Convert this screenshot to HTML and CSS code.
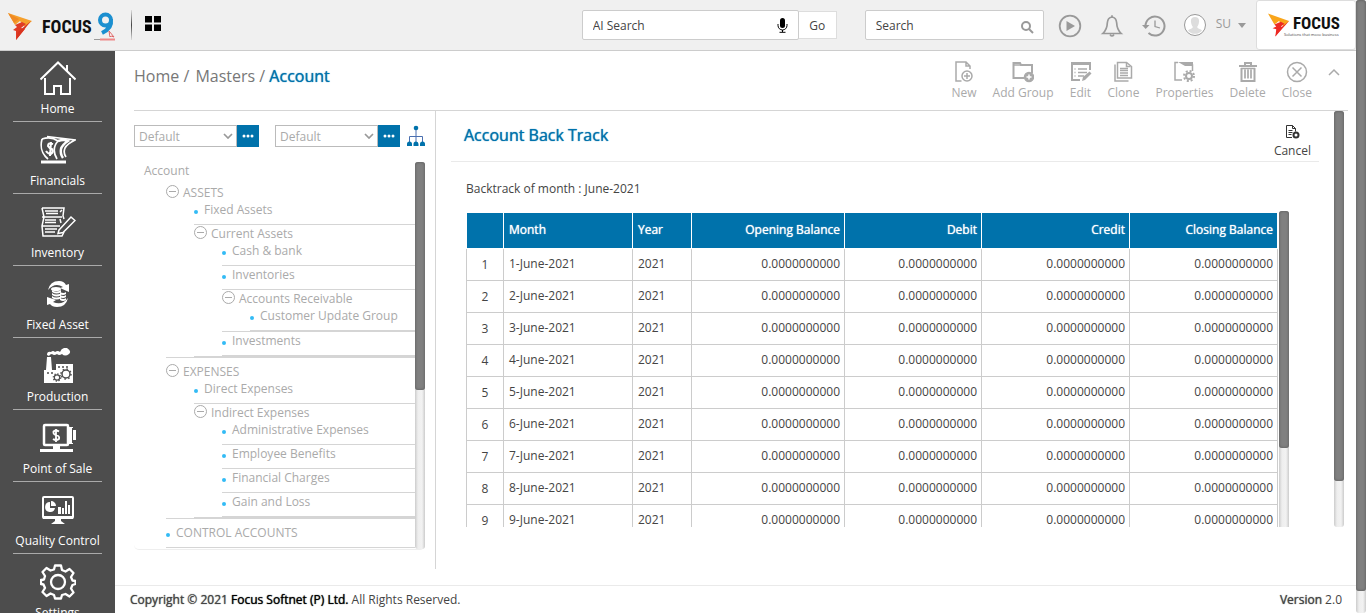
FILE: index.html
```html
<!DOCTYPE html>
<html lang="en">
<head>
<meta charset="utf-8">
<title>Account Back Track</title>
<link rel="stylesheet" href="styles.css">
</head>
<body>
<div class="app">
  <header class="topbar">
    <a class="brand" href="#" aria-label="Focus 9 home">
      <svg class="brand-mark" viewBox="0 0 26 30" width="26" height="30"><path d="M1 1 25 9 18 15 13 9 8 13Z" fill="#f5a02c"/><path d="M1 1 12 7 7 11Z" fill="#f08a24"/><path d="M8 13 15 10 19 12 14 16 18 17 9 28 9 19 6 18 10 15Z" fill="#e03c25"/><path d="M18 14 24 9 9 28 11 20Z" fill="#d9341f"/></svg>
      <span class="brand-name">FOCUS</span>
      <svg class="brand-nine" viewBox="0 0 24 30" width="24" height="30"><path d="M17 8A5.500 5.500 0 1 0 11.500 13.500C15 13.500 17 11 17 8C18 14 14 18 8 21" fill="none" stroke="#1b8fd0" stroke-width="4"/><path d="m15 19 5 6-3-1-1 1z" fill="#fff" stroke="#d66" stroke-width="1"/><path d="M-8 27.500h14" stroke="#999" stroke-width="1"/><path d="M6 27.500h15" stroke="#e88" stroke-width="2"/></svg>
    </a>
    <span class="divider"></span>
    <button class="icon-btn" aria-label="Apps"><svg viewBox="0 0 16 15" width="16" height="15"><path d="M0 0h7v6.500H0zM9 0h7v6.500H9zM0 8.500h7V15H0zM9 8.500h7V15H9z" fill="#000"/></svg></button>
    <form class="ai-search">
      <div class="field ai-field">
        <input type="text" placeholder="AI Search" aria-label="AI Search">
        <button type="button" class="icon-btn" aria-label="Voice search"><svg viewBox="0 0 11 15" width="11" height="15"><rect x="3" y="0" width="5" height="10" rx="2.500"/><path d="M1 6v1.500a4.500 4.500 0 0 0 9 0V6M5.500 12v2M2.500 14.300h6" fill="none" stroke="#000"/></svg></button>
      </div>
      <button type="button" class="go">Go</button>
    </form>
    <div class="field find-field">
      <input type="text" placeholder="Search" aria-label="Search">
      <button type="button" class="icon-btn" aria-label="Find"><svg viewBox="0 0 13 13" width="13" height="13" fill="none" stroke="#999" stroke-width="2"><circle cx="5" cy="5" r="4"/><path d="m8 8 4 4"/></svg></button>
    </div>
    <div class="top-icons">
      <button class="icon-btn" aria-label="Play"><svg viewBox="0 0 24 24" width="24" height="24"><circle cx="12" cy="12" r="10.300" fill="none" stroke="#999" stroke-width="1.800"/><path d="M8.500 7v10l8.500-5z" fill="#999"/></svg></button>
      <button class="icon-btn" aria-label="Notifications"><svg viewBox="0 0 24 24" width="24" height="24" fill="none" stroke="#999" stroke-width="1.700"><path d="M12 3C8.500 3.500 7.500 6 7.300 9 7.200 14 6 16.500 2.800 19.500H21.200C18 16.500 16.800 14 16.700 9 16.500 6 15.500 3.500 12 3z"/><path d="M12 3V1.200M10 20.500q2 3 4 0"/></svg></button>
      <button class="icon-btn" aria-label="History"><svg viewBox="0 0 24 24" width="24" height="24" fill="none" stroke="#999" stroke-width="2"><path d="M3.500 12a9.500 9.500 0 1 1 3 7"/><path d="m13 6.500v6l5 1.500" stroke-width="1.300"/><path d="M0 11h7.500L3.700 15z" fill="#999" stroke="none"/></svg></button>
    </div>
    <button class="user"><svg viewBox="0 0 24 24" width="24" height="24"><circle cx="12" cy="12" r="10.500" fill="#fff" stroke="#999"/><path d="M12 4c-3 0-4.500 2-4 5 .3 2.500 1 4 2 5-1 2-4 2-5 3.500a9 9 0 0 0 14 0C18 16 15 16 14 14c1-1 1.700-2.500 2-5 .5-3-1-5-4-5z" fill="#ddd"/></svg><span>SU</span><svg viewBox="0 0 8 5" width="8" height="5"><path d="M0 0h8L4 5z" fill="#999"/></svg></button>
    <a class="client" href="#" aria-label="Focus">
      <svg viewBox="0 0 24 26" width="22" height="25"><path d="M0 0 23 8 17 14 12 8 7 12Z" fill="#f9a51a"/><path d="M7 12 14 9 18 11 14 14 16 15 8 25 9 17 5 16 9 14Z" fill="#ed2a24"/><path d="M17 13 23 8 8 25 10 18Z" fill="#ed2a24"/></svg>
      <span class="client-text"><span class="client-name">FOCUS</span><span class="client-tag">Solutions that move business</span></span>
    </a>
  </header>

  <div class="frame">
    <nav class="sidebar">
      <a class="side-item" href="#"><svg viewBox="0 0 36 36" fill="none" stroke="#fff" stroke-width="2"><path d="M0.500 19.500 18 2.500 35.500 19.500M27 10.500V5M5 18v16h9v-8h7v8h9V18"/></svg><span>Home</span></a>
      <a class="side-item" href="#"><svg viewBox="0 0 36 36" fill="none" stroke="#fff" stroke-width="1.700"><path d="M2 7q9-3 16 2-7 8-1 18M2 7c-2 8-1 14 6 20"/><path d="M7 4.500 35 8q-8 4-10 8-2 5 1 9" /><path d="M18 9q6-2 10 0-6 4-7 8-1 5 2 9" stroke-width="2.500"/><path d="M1 30h25" stroke-width="3"/><path d="M13 12q-5-2-5 2 1 2 4 3 2 3-1 5-3 0-5-3M11 10l-1 14" stroke-width="2"/></svg><span>Financials</span></a>
      <a class="side-item" href="#"><svg viewBox="0 0 36 36" fill="none" stroke="#fff" stroke-width="1.500"><path d="M2 4h22l-1 8 1 3M2 4l2 9-2 9 1 10h19l2-4M2 13h20M2 22h18M5 7h13M6 9.500h12M5 16h11M5 18.500h11M5 25h12M5 28h10M20 8l2-2M20 15l1 4"/><path d="m19 26 12-13 4 3.500-12 12-5 1z" fill="#4d4d4d"/></svg><span>Inventory</span></a>
      <a class="side-item" href="#"><svg viewBox="0 0 36 36" fill="#fff"><path d="M8 14Q10 5 19 5q5 0 7 4l3-1v8l-9-4 3-1q-8-5-15 3zM28 22q-2 9-11 9-5 0-7-3l-3 1v-8l9 3-3 2q9 4 15-4z"/><ellipse cx="16" cy="13" rx="5" ry="2"/><path d="M12 14q4 3 9 0v2q-4 3-9 0zM12 17q4 3 9 0v2q-4 3-9 0zM12 20q4 3 9 0v2q-4 3-9 0zM20 16q4 2 6 0v2q-3 2-6 0zM20 19q4 2 6 0v2q-3 2-6 0zM20 22q4 2 6 0v2q-3 2-6 0z"/></svg><span>Fixed Asset</span></a>
      <a class="side-item" href="#"><svg viewBox="0 0 36 36" fill="#fff"><path d="M4 35V22h2L7 9h4l1 13h4v-6h17v19z"/><path d="M7 7q0-4 4-3 2-2 4 0 3-2 5 0 2-5 7-4 5 3 2 6-4 3-7 0-3 2-5 0-3 2-5 0-2 0-3 2z"/><path d="M18 19h2m2 0h2m2 0h2M7 25h2m2 0h2" stroke="#4d4d4d" stroke-width="1.500"/><g fill="none" stroke="#4d4d4d"><circle cx="26" cy="26" r="4" stroke-width="1.500"/><circle cx="26" cy="26" r="5" stroke-width="1.500" stroke-dasharray="1.500 2.400"/><circle cx="17" cy="29.500" r="2.700" stroke-width="1.200"/><circle cx="17" cy="29.500" r="3.600" stroke-width="1.500" stroke-dasharray="1.200 1.600"/></g></svg><span>Production</span></a>
      <a class="side-item" href="#"><svg viewBox="0 0 36 36"><rect x="4" y="5" width="24" height="20" rx="1" fill="none" stroke="#fff" stroke-width="2.500"/><path d="M29 7h4v3h3v10h-3v4h-4zM13 26h7v3h13v3H0v-3h13z" fill="#fff"/><path d="M32.500 8v15" stroke="#4d4d4d"/><path d="M19 11.500q-3-2-5.500 0-.5 3 2.500 3.500 4 1 3 4-3 2-6 0M16 9v13" fill="none" stroke="#fff" stroke-width="1.800"/></svg><span>Point of Sale</span></a>
      <a class="side-item" href="#"><svg viewBox="0 0 36 36" fill="#fff"><rect x="3" y="5" width="30" height="21" rx="1" fill="none" stroke="#fff" stroke-width="2"/><path d="M3 24h30v3H3zM15 27h6v2l4 3H11l4-3zM18 15h3v7h-3zM22 16h2v6h-2zM25 9h2v13h-2zM28 13h2v9h-2z"/><path d="M10 10a5 5 0 1 0 5 6h-5zM11 9v5h5a5 5 0 0 0-5-5z"/></svg><span>Quality Control</span></a>
      <a class="side-item" href="#"><svg viewBox="0 0 36 36" fill="none" stroke="#fff" stroke-width="2.300" stroke-linejoin="round"><circle cx="18" cy="18" r="7"/><path d="M15 1.500h6l1 4.500 3.500 1.500 4-2.500 4 4-2.500 4 1.500 3.500 3 .5v3l-3 1-1.500 3.500 2.500 4-4 4-4-2.500L22 31l-1 3.500h-6L14 31l-3.500-1.500-4 2.500-4-4L5 24l-1.500-3.500L1 20v-4l3-.5L5 12 2.500 8l4-4 4 2.500L14 5.500z"/></svg><span>Settings</span></a>
    </nav>

    <div class="main">
      <div class="page-head">
        <div class="crumbs"><a href="#">Home</a> / <a class="parent" href="#">Masters</a> / <strong>Account</strong></div>
        <div class="tools">
          <button><svg viewBox="0 0 22 22"><path d="M8.500 20H3V1h10l4 4v3M13 1v4h4"/><circle cx="14" cy="15" r="5"/><path d="M14 12v6M11 15h6"/></svg>New</button>
          <button><svg viewBox="0 0 22 22"><path d="M12 17H1.500V2H8l1 2h11v8" stroke-width="2"/><path d="M1.500 4h9"/><circle cx="17" cy="16" r="4.500" fill="#aaa"/><path d="M17 13.500v5M14.500 16h5" stroke="#fff"/></svg>Add Group</button>
          <button><svg viewBox="0 0 22 22"><path d="M10 19H2V2h18v7" stroke-width="2"/><path d="M2 2.500h18" stroke-width="3"/><path d="M8 8h9M8 11.500h9M8 15h6M4.500 8h1M4.500 11.500h1M4.500 15h1"/><path d="m12 20 1-4 6.500-5.500 2 2L15 19z" fill="#aaa" stroke="none"/></svg>Edit</button>
          <button><svg viewBox="0 0 22 22" stroke-width="1"><path d="M5.500 17V1.500h9l5 4V17zM3 3.500v16.500h13.500"/><path d="M8 7.500h8M8 9.500h8M8 12h8M8 14.500h8M14.500 1.500v4h4"/></svg>Clone</button>
          <button><svg viewBox="0 0 22 22"><path d="M9 19H2V1.500h3M12 4h7.500v6"/><path d="M5 1h15v4h-8z" fill="#aaa" stroke="none"/><circle cx="16" cy="15" r="3" stroke-width="2"/><circle cx="16" cy="15" r="5" stroke-width="2" stroke-dasharray="2 1.930"/></svg>Properties</button>
          <button><svg viewBox="0 0 22 22"><path d="M2 5h18M8 4V2h6v2" stroke-width="2"/><path d="M4.500 7v13h13V7" stroke-width="2"/><path d="M4 7.500h14M8 8.500v9M11 8.500v9M14 8.500v9" stroke-width="1.700"/></svg>Delete</button>
          <button><svg viewBox="0 0 22 22"><circle cx="11" cy="11" r="9.500"/><path d="m6.500 6.500 9 9M15.500 6.500l-9 9"/></svg>Close</button>
          <button class="collapse" aria-label="Collapse"><svg viewBox="0 0 12 8"><path d="m1 7 5-5 5 5"/></svg></button>
        </div>
      </div>

      <div class="workspace">
        <aside class="tree-panel">
          <div class="tree-tools">
            <div class="picker"><label class="drop"><select aria-label="View"><option>Default</option></select><svg viewBox="0 0 10 6" width="10" height="6"><path d="m1 1 4 4 4-4" fill="none" stroke="#999" stroke-width="1.700"/></svg></label><button aria-label="View options"><svg viewBox="0 0 12 4" width="12" height="4" fill="#fff"><circle cx="2" cy="2" r="1.500"/><circle cx="6" cy="2" r="1.500"/><circle cx="10" cy="2" r="1.500"/></svg></button></div>
            <div class="picker"><label class="drop"><select aria-label="Tree"><option>Default</option></select><svg viewBox="0 0 10 6" width="10" height="6"><path d="m1 1 4 4 4-4" fill="none" stroke="#999" stroke-width="1.700"/></svg></label><button aria-label="Tree options"><svg viewBox="0 0 12 4" width="12" height="4" fill="#fff"><circle cx="2" cy="2" r="1.500"/><circle cx="6" cy="2" r="1.500"/><circle cx="10" cy="2" r="1.500"/></svg></button></div>
            <button class="icon-btn" aria-label="Hierarchy"><svg viewBox="0 0 18 22" width="18" height="22"><path d="M9 3v16M2.500 18v-6.500h13v6.500" fill="none" stroke="#4a6fb0"/><g fill="#0072ab"><circle cx="9" cy="3" r="2.300"/><path d="M0 21v-2a2.500 2.500 0 0 1 5 0v2zM6.500 21v-2a2.500 2.500 0 0 1 5 0v2zM13 21v-2a2.500 2.500 0 0 1 5 0v2z"/></g></svg></button>
          </div>
          <div class="tree-box">
            <div class="tree">
              <div class="tree-title">Account</div>
              <ul class="root">
                <li><div class="node"><button aria-label="Collapse Assets"></button>ASSETS</div>
                  <ul>
                    <li class="leaf">Fixed Assets</li>
                    <li><div class="node"><button aria-label="Collapse Current Assets"></button>Current Assets</div>
                      <ul>
                        <li class="leaf">Cash &amp; bank</li>
                        <li class="leaf">Inventories</li>
                        <li><div class="node"><button aria-label="Collapse Accounts Receivable"></button>Accounts Receivable</div>
                          <ul><li class="leaf">Customer Update Group</li></ul></li>
                        <li class="leaf">Investments</li>
                      </ul></li>
                  </ul></li>
                <li><div class="node"><button aria-label="Collapse Expenses"></button>EXPENSES</div>
                  <ul>
                    <li class="leaf">Direct Expenses</li>
                    <li><div class="node"><button aria-label="Collapse Indirect Expenses"></button>Indirect Expenses</div>
                      <ul>
                        <li class="leaf">Administrative Expenses</li>
                        <li class="leaf">Employee Benefits</li>
                        <li class="leaf">Financial Charges</li>
                        <li class="leaf">Gain and Loss</li>
                      </ul></li>
                  </ul></li>
                <li class="leaf">CONTROL ACCOUNTS</li>
              </ul>
            </div>
            <div class="bar"><div class="thumb" style="height:59%"></div></div>
          </div>
        </aside>

        <section class="detail">
          <div class="detail-body">
            <div class="detail-head">
              <h1>Account Back Track</h1>
              <button class="cancel"><svg viewBox="0 0 15 14" width="15" height="14" fill="none" stroke="#333"><path d="M7 12.500H1.500V.5h6l3 3v3M7.500.5v3h3M3.500 5.500h4M3.500 7.500h4M3.500 9.500h3"/><circle cx="11" cy="10" r="2.500" stroke-width="2"/></svg>Cancel</button>
            </div>
            <p class="note">Backtrack of month : June-2021</p>
            <div class="grid-area">
              <div class="grid-view">
                <table>
                  <colgroup><col class="c-no"><col class="c-month"><col class="c-year"><col class="c-open"><col class="c-debit"><col class="c-amt"><col class="c-amt"></colgroup>
                  <thead><tr><th></th><th>Month</th><th>Year</th><th class="num">Opening Balance</th><th class="num">Debit</th><th class="num">Credit</th><th class="num">Closing Balance</th></tr></thead>
                  <tbody>
                    <tr><td>1</td><td>1-June-2021</td><td>2021</td><td class="num">0.0000000000</td><td class="num">0.0000000000</td><td class="num">0.0000000000</td><td class="num">0.0000000000</td></tr>
                    <tr><td>2</td><td>2-June-2021</td><td>2021</td><td class="num">0.0000000000</td><td class="num">0.0000000000</td><td class="num">0.0000000000</td><td class="num">0.0000000000</td></tr>
                    <tr><td>3</td><td>3-June-2021</td><td>2021</td><td class="num">0.0000000000</td><td class="num">0.0000000000</td><td class="num">0.0000000000</td><td class="num">0.0000000000</td></tr>
                    <tr><td>4</td><td>4-June-2021</td><td>2021</td><td class="num">0.0000000000</td><td class="num">0.0000000000</td><td class="num">0.0000000000</td><td class="num">0.0000000000</td></tr>
                    <tr><td>5</td><td>5-June-2021</td><td>2021</td><td class="num">0.0000000000</td><td class="num">0.0000000000</td><td class="num">0.0000000000</td><td class="num">0.0000000000</td></tr>
                    <tr><td>6</td><td>6-June-2021</td><td>2021</td><td class="num">0.0000000000</td><td class="num">0.0000000000</td><td class="num">0.0000000000</td><td class="num">0.0000000000</td></tr>
                    <tr><td>7</td><td>7-June-2021</td><td>2021</td><td class="num">0.0000000000</td><td class="num">0.0000000000</td><td class="num">0.0000000000</td><td class="num">0.0000000000</td></tr>
                    <tr><td>8</td><td>8-June-2021</td><td>2021</td><td class="num">0.0000000000</td><td class="num">0.0000000000</td><td class="num">0.0000000000</td><td class="num">0.0000000000</td></tr>
                    <tr><td>9</td><td>9-June-2021</td><td>2021</td><td class="num">0.0000000000</td><td class="num">0.0000000000</td><td class="num">0.0000000000</td><td class="num">0.0000000000</td></tr>
                  </tbody>
                </table>
              </div>
              <div class="bar"><div class="thumb" style="height:75%"></div></div>
            </div>
          </div>
          <div class="bar"><div class="thumb" style="height:89%"></div></div>
        </section>
      </div>

      <footer class="footer">
        <span><b>Copyright © 2021 <span class="company">Focus Softnet (P) Ltd.</span></b> All Rights Reserved.</span>
        <span><b>Version</b> 2.0</span>
      </footer>
    </div>
  </div>
</div>
<div class="bar page-bar"><div class="thumb" style="height:96.4%"></div></div>
</body>
</html>
```
FILE: styles.css
```css
* { box-sizing: border-box; }

body {
  display: flex;
  height: 100vh;
  margin: 0;
  overflow: hidden;
  background: #fff;
  color: #444;
  font: 12px/16px "Open Sans", sans-serif;
}

button {
  padding: 0;
  border: 0;
  background: none;
  color: inherit;
  font: inherit;
  cursor: pointer;
}

a { color: inherit; text-decoration: none; }
svg { display: block; flex: none; }
ul { margin: 0; padding: 0; list-style: none; }

/* semi-bold emphasis that keeps the regular letter widths */
h1, th, .crumbs strong, .footer b {
  font-weight: 400;
  text-shadow: 0 0 1px currentColor;
}

.app { display: flex; flex: 1; flex-direction: column; min-width: 0; }

/* scroll bars */
.bar {
  flex: none;
  width: 10px;
  border-radius: 3px;
  background: linear-gradient(90deg, #ccc, #eee 30%, #f2f2f2 70%, #ccc);
}
.thumb {
  border-radius: 3px;
  background: #808080;
  box-shadow: inset 0 0 3px #555;
}

/* top bar */
.topbar {
  z-index: 1;
  display: flex;
  flex: none;
  align-items: center;
  height: 50px;
  background: #f0f0f0;
  box-shadow: 0 1px 0 #ccc;
}
.brand { display: flex; align-items: center; padding: 4px 0 0 7px; }
.brand-name {
  margin: 0 2px 0 9px;
  color: #111;
  font: bold 18px/24px "Roboto Condensed", "Liberation Sans Narrow", Roboto, sans-serif;
}
.divider {
  width: 1px;
  height: 30px;
  margin: 0 13px;
  background: linear-gradient(#ddd, #444, #ddd);
}
.topbar > .icon-btn { margin-bottom: 4px; }
.ai-search { display: flex; align-items: center; margin-left: auto; }
.field {
  display: flex;
  align-items: center;
  height: 30px;
  padding: 0 10px;
  border: 1px solid #ccc;
  border-radius: 2px;
  background: #fff;
}
.field input {
  flex: 1;
  min-width: 0;
  padding: 2px 0 0;
  border: 0;
  outline: 0;
  background: none;
  font: inherit;
}
.field input::placeholder { color: #444; opacity: 1; }
.ai-field { width: 217px; }
.find-field { width: 179px; margin-left: 28px; padding-right: 9px; }
.find-field .icon-btn { padding-top: 4px; }
.go {
  width: 38px;
  height: 28px;
  padding-top: 2px;
  border: 1px solid #ddd;
  border-left: 0;
  background: #fff;
}
.top-icons { display: flex; gap: 18px; margin-left: 14px; padding-top: 2px; }
.user { display: flex; align-items: center; gap: 9px; margin-left: 17px; color: #999; }
.user span { padding-bottom: 2px; }
.user svg:last-child { margin-left: -2px; }
.client {
  display: flex;
  align-items: center;
  gap: 3px;
  width: 100px;
  height: 50px;
  margin-left: 10px;
  padding-left: 11px;
  border: 1px solid #ddd;
  border-radius: 3px;
  background: #fff;
}
.client-text { display: flex; flex-direction: column; padding-top: 2px; }
.client-name {
  color: #111;
  font: bold 17px/17px "Roboto Condensed", "Liberation Sans Narrow", Roboto, sans-serif;
}
.client-tag { margin-left: -9px; color: #444; font-size: 4px; line-height: 5px; }

/* side navigation */
.frame { display: flex; flex: 1; min-height: 0; }
.sidebar {
  flex: none;
  width: 115px;
  padding: 0 13px;
  overflow: hidden;
  background: #4d4d4d;
}
.side-item {
  display: flex;
  flex-direction: column;
  align-items: center;
  height: 72px;
  padding-top: 10px;
  border-bottom: 1px solid #aaa;
  color: #fff;
  white-space: nowrap;
}
.side-item svg { width: 36px; height: 36px; margin-bottom: 5px; }

/* page heading */
.main { display: flex; flex: 1; flex-direction: column; min-width: 0; }
.page-head {
  display: flex;
  flex: none;
  justify-content: space-between;
  height: 61px;
  margin: 0 8px 0 19px;
  padding: 11px 8px 0 0;
  border-bottom: 1px solid #d5d5d5;
}
.crumbs { padding-top: 3px; color: #777; font-size: 16px; line-height: 24px; }
.crumbs .parent { margin-left: 2px; }
.crumbs strong { color: #0072ab; }
.tools { display: flex; gap: 16px; align-items: flex-start; color: #aaa; }
.tools button { display: flex; flex-direction: column; align-items: center; gap: 2px; }
.tools svg { width: 22px; height: 22px; fill: none; stroke: #aaa; stroke-width: 1.5; }
.tools .collapse { padding-top: 7px; }
.tools .collapse svg { width: 12px; height: 8px; }

/* account tree */
.workspace { display: flex; flex: 1; min-height: 0; padding-bottom: 16px; }
.tree-panel {
  display: flex;
  flex: none;
  flex-direction: column;
  width: 321px;
  padding: 14px 10px 19px 19px;
  border-right: 1px solid #d5d5d5;
  color: #aaa;
}
.tree-tools { display: flex; flex: none; gap: 16px; height: 37px; }
.tree-tools > .icon-btn { height: 22px; margin-left: -9px; }
.picker { display: flex; height: 22px; }
.picker > button { display: grid; place-items: center; width: 22px; background: #0072ab; }
.drop { display: grid; align-items: center; width: 103px; }
.drop select, .drop svg { grid-area: 1 / 1; }
.drop svg { justify-self: end; margin-right: 4px; pointer-events: none; }
.drop select {
  width: 100%;
  height: 22px;
  padding: 1px 4px 0;
  appearance: none;
  border: 1px solid #bbb;
  border-radius: 0;
  background: #fff;
  color: #aaa;
  font: inherit;
}
.tree-box {
  display: flex;
  flex: 1;
  min-height: 0;
  border-bottom: 1px solid #eee;
  border-radius: 5px;
}
.tree { flex: 1; overflow: hidden; line-height: 17px; white-space: nowrap; }
.tree-title { height: 17px; padding-left: 10px; }
.tree ul { padding-left: 28px; }
.tree .root { padding-left: 32px; }
.tree li { border-bottom: 1px solid #d5d5d5; }
.tree .root > li { padding-top: 5px; }
.node { display: flex; align-items: center; gap: 4px; height: 17px; }
.node button {
  display: grid;
  place-items: center;
  width: 13px;
  height: 13px;
  margin-bottom: 3px;
  border: 1px solid #aaa;
  border-radius: 50%;
}
.node button::before { width: 7px; height: 1px; background: #aaa; content: ""; }
.leaf { padding-bottom: 6px; }
.leaf::before {
  display: inline-block;
  width: 4px;
  height: 4px;
  margin-right: 6px;
  border-radius: 50%;
  background: #33bbf5;
  content: "";
}

/* back track details */
.detail { display: flex; flex: 1; min-width: 0; padding: 0 12px 42px 15px; }
.detail-body { display: flex; flex: 1; flex-direction: column; min-width: 0; padding-right: 15px; }
.detail-head {
  display: flex;
  flex: none;
  justify-content: space-between;
  height: 51px;
  padding: 12px 8px 0 13px;
  border-bottom: 1px solid #eaeaea;
}
h1 { margin: 0; color: #0072ab; font-size: 16px; line-height: 24px; }
.cancel { display: flex; flex-direction: column; align-items: center; gap: 4px; height: 36px; padding-top: 2px; }
.note { margin: 18px 0 14px 15px; line-height: 17px; }
.grid-area { display: flex; flex: 1; gap: 1px; min-height: 0; padding: 0 30px 0 15px; }
.grid-area .bar { border-radius: 3px 3px 0 0; }
.grid-view { flex: 1; min-width: 0; padding-top: 2px; overflow: hidden; }
table { width: 100%; border-spacing: 0; table-layout: fixed; }
.c-no { width: 38px; }
.c-month { width: 129px; }
.c-year { width: 59px; }
.c-open { width: 153px; }
.c-debit { width: 137px; }
.c-amt { width: 148px; }
th, td { padding: 0 5px 2px; text-align: left; }
th {
  height: 36px;
  border-right: 1px solid #fff;
  border-bottom: 1px solid #fff;
  background: #0072ab;
  color: #fff;
}
th:first-child { border-left: 1px solid #fff; }
td { height: 32px; border-right: 1px solid #ccc; border-bottom: 1px solid #ccc; }
td:first-child { padding-bottom: 0; border-left: 1px solid #ccc; text-align: center; }
.num { padding-right: 4px; text-align: right; }

/* footer */
.footer {
  display: flex;
  flex: none;
  justify-content: space-between;
  padding: 6px 14px 5px 15px;
  border-top: 1px solid #eaeaea;
}
.company { color: #000; }
```
